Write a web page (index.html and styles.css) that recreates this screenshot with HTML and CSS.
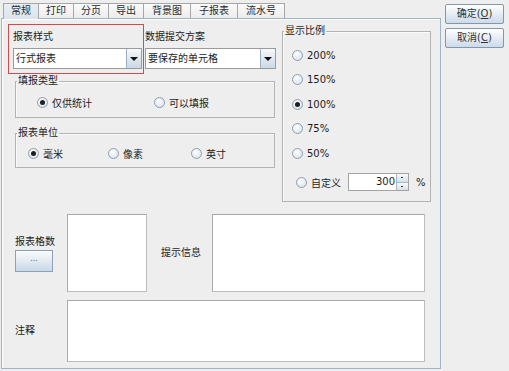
FILE: index.html
```html
<!DOCTYPE html>
<html lang="zh-CN">
<head>
  <meta charset="UTF-8">
  <title>报表属性</title>
  <link rel="stylesheet" href="styles.css">
</head>
<body>
  <div class="window">
    <div class="tabbed">
      <div class="tabs">
        <div class="tab active">常规</div>
        <div class="tab">打印</div>
        <div class="tab">分页</div>
        <div class="tab">导出</div>
        <div class="tab long">背景图</div>
        <div class="tab long">子报表</div>
        <div class="tab long">流水号</div>
      </div>

      <div class="panel">
        <div class="top">
          <div class="left">
            <div class="row1">
              <div class="redbox">
                <div class="label">报表样式</div>
                <div class="combo small">
                  <span class="combo-text">行式报表</span>
                  <span class="combo-btn"><i class="tri"></i></span>
                </div>
              </div>
              <div class="submit">
                <div class="label">数据提交方案</div>
                <div class="combo wide">
                  <span class="combo-text">要保存的单元格</span>
                  <span class="combo-btn"><i class="tri"></i></span>
                </div>
              </div>
            </div>

            <fieldset class="group fill">
              <legend>填报类型</legend>
              <div class="opts">
                <label class="opt w117"><i class="radio on"></i>仅供统计</label>
                <label class="opt"><i class="radio"></i>可以填报</label>
              </div>
            </fieldset>

            <fieldset class="group unit">
              <legend>报表单位</legend>
              <div class="opts">
                <label class="opt w80"><i class="radio on"></i>毫米</label>
                <label class="opt w83"><i class="radio"></i>像素</label>
                <label class="opt"><i class="radio"></i>英寸</label>
              </div>
            </fieldset>
          </div>

          <fieldset class="group scale">
            <legend>显示比例</legend>
            <div class="scale-list">
              <label class="opt"><i class="radio"></i>200%</label>
              <label class="opt"><i class="radio"></i>150%</label>
              <label class="opt"><i class="radio on"></i>100%</label>
              <label class="opt"><i class="radio"></i>75%</label>
              <label class="opt"><i class="radio"></i>50%</label>
              <div class="custom">
                <label class="opt"><i class="radio"></i>自定义</label>
                <div class="spinner">
                  <span class="spin-value">300</span>
                  <span class="spin-btns">
                    <span class="spin-up"></span>
                    <span class="spin-down"></span>
                  </span>
                </div>
                <span class="pct">%</span>
              </div>
            </div>
          </fieldset>
        </div>

        <div class="bottom">
          <div class="cell-label stack">
            <span>报表格数</span>
            <span class="dots-btn">...</span>
          </div>
          <div class="area"></div>
          <div class="cell-label hint">提示信息</div>
          <div class="area"></div>
          <div class="cell-label">注释</div>
          <div class="area span3"></div>
        </div>
      </div>
    </div>

    <div class="actions">
      <div class="btn">确定(<u>O</u>)</div>
      <div class="btn">取消(<u>C</u>)</div>
    </div>
  </div>
</body>
</html>
```

FILE: styles.css
```css
* {
  box-sizing: border-box;
}

body {
  margin: 0;
  background-color: #eeeeee;
  font-family: "DejaVu Sans", "Noto Sans CJK SC", sans-serif;
  font-size: 10px;
  color: #1c1c1c;
  width: 509px;
  height: 371px;
  overflow: hidden;
}

.window {
  display: flex;
  align-items: flex-start;
}

/* tabbed pane */
.tabbed {
  margin-left: 1px;
  width: 440px;
}

.tabs {
  display: flex;
  height: 18px;
  padding-left: 2px;
  align-items: flex-end;
}

.tab {
  height: 15px;
  line-height: 14px;
  padding: 0 7px;
  border: 1px solid #a7a7a7;
  border-bottom: none;
  border-left: none;
  background: linear-gradient(#fbfbfb, #ececec);
  color: #2a2a2a;
}

.tab.long {
  padding: 0 8px;
}

.tab:first-child {
  border-left: 1px solid #a7a7a7;
}

.tab.active {
  height: 16px;
  margin-bottom: -1px;
  background: linear-gradient(#e9eef4, #dbe3ec);
  position: relative;
  z-index: 1;
}

.panel {
  height: 351px;
  border: 1px solid #9fb4ca;
  box-shadow: inset 1px 1px 0 #ffffff;
  padding: 5px 0 0 0;
}

.top {
  display: flex;
  align-items: flex-start;
}

.left {
  width: 280px;
  padding-left: 6px;
}

.row1 {
  display: flex;
  align-items: flex-start;
}

.label {
  height: 14px;
  line-height: 14px;
}

.redbox {
  width: 136px;
  height: 50px;
  border: 1px solid #d44a4a;
  padding: 5px 0 0 4px;
}

.submit {
  margin-left: 1px;
  padding-top: 6px;
}

.combo {
  display: flex;
  height: 21px;
  margin-top: 4px;
  background: #ffffff;
  border: 1px solid #9b9b9b;
}

.combo.small {
  width: 129px;
}

.combo.wide {
  width: 131px;
}

.combo-text {
  flex: 1;
  line-height: 19px;
  padding-left: 2px;
}

.combo-btn {
  width: 15px;
  border-left: 1px solid #9fb0c2;
  background: linear-gradient(#f7f9fb, #cbd8e6);
  display: flex;
  align-items: center;
  justify-content: center;
}

.tri {
  width: 0;
  height: 0;
  border-left: 4px solid transparent;
  border-right: 4px solid transparent;
  border-top: 4px solid #111111;
}

/* titled groups */
.group {
  margin: 0;
  padding: 0;
  min-width: 0;
  border: 1px solid #b3b3b3;
  box-shadow: inset 1px 1px 0 #fafafa;
}

.group legend {
  height: 14px;
  line-height: 14px;
  padding: 0 1px;
  margin-left: 1px;
}

.fill {
  width: 260px;
  margin-left: 7px;
}

.unit {
  width: 260px;
  margin: 8px 0 0 7px;
}

.opts {
  display: flex;
  height: 16px;
}

.fill .opts {
  margin: 6px 0 7px 21px;
}

.unit .opts {
  margin: 5px 0 6px 12px;
}

.opt {
  display: flex;
  align-items: center;
  height: 16px;
  white-space: nowrap;
}

.w117 {
  width: 117px;
}

.w80 {
  width: 80px;
}

.w83 {
  width: 83px;
}

.radio {
  width: 11px;
  height: 11px;
  margin-right: 4px;
  border: 1px solid #8e9db0;
  border-radius: 50%;
  background: radial-gradient(circle at 40% 35%, #ffffff, #d5dde7);
  display: flex;
  align-items: center;
  justify-content: center;
}

.radio.on::after {
  content: "";
  width: 5px;
  height: 5px;
  border-radius: 50%;
  background: #1e1e1e;
}

/* scale group */
.scale {
  width: 149px;
}

.scale-list {
  display: flex;
  flex-direction: column;
  gap: 8.5px;
  padding: 9px 0 10px 9px;
}

.custom {
  display: flex;
  align-items: center;
  height: 18px;
  margin-top: 3.5px;
  padding-left: 4px;
}

.spinner {
  display: flex;
  width: 61px;
  height: 18px;
  margin-left: 7px;
  background: #ffffff;
  border: 1px solid #a3a3a3;
}

.spin-value {
  flex: 1;
  text-align: right;
  line-height: 16px;
  padding-right: 1px;
}

.spin-btns {
  width: 12px;
  display: flex;
  flex-direction: column;
  border-left: 1px solid #a9b6c4;
}

.spin-up,
.spin-down {
  flex: 1;
  background: linear-gradient(#f7f9fb, #d6e0ea);
  position: relative;
}

.spin-up {
  border-bottom: 1px solid #a9b6c4;
}

.spin-up::after,
.spin-down::after {
  content: "";
  position: absolute;
  left: 4px;
  top: 3px;
  width: 2px;
  height: 1px;
  background: #333333;
}

.pct {
  margin-left: 7px;
}

/* lower text areas */
.bottom {
  display: grid;
  grid-template-columns: 65px 80px 65px 213px;
  grid-template-rows: 78px 62px;
  row-gap: 8px;
  margin-top: 12px;
}

.cell-label {
  align-self: center;
  padding-left: 13px;
  line-height: 14px;
}

.cell-label.stack {
  display: flex;
  flex-direction: column;
  align-items: flex-start;
  gap: 1px;
}

.cell-label.hint {
  padding-left: 14px;
}

.dots-btn {
  width: 38px;
  height: 22px;
  line-height: 16px;
  text-align: center;
  font-size: 8px;
  color: #666666;
  border: 1px solid #8da0b5;
  background: linear-gradient(#fafcfd, #cad8e7);
}

.area {
  background: #ffffff;
  border: 1px solid #a9a9a9;
  border-right-color: #bcbcbc;
  border-bottom-color: #bcbcbc;
}

.span3 {
  grid-column: 2 / 5;
}

/* dialog buttons */
.actions {
  display: flex;
  flex-direction: column;
  gap: 4px;
  margin: 4px 0 0 4px;
}

.btn {
  width: 59px;
  height: 20px;
  line-height: 18px;
  text-align: center;
  color: #333333;
  border: 1px solid #8496aa;
  border-radius: 2px;
  background: linear-gradient(#ffffff, #ccdaea);
}
```
